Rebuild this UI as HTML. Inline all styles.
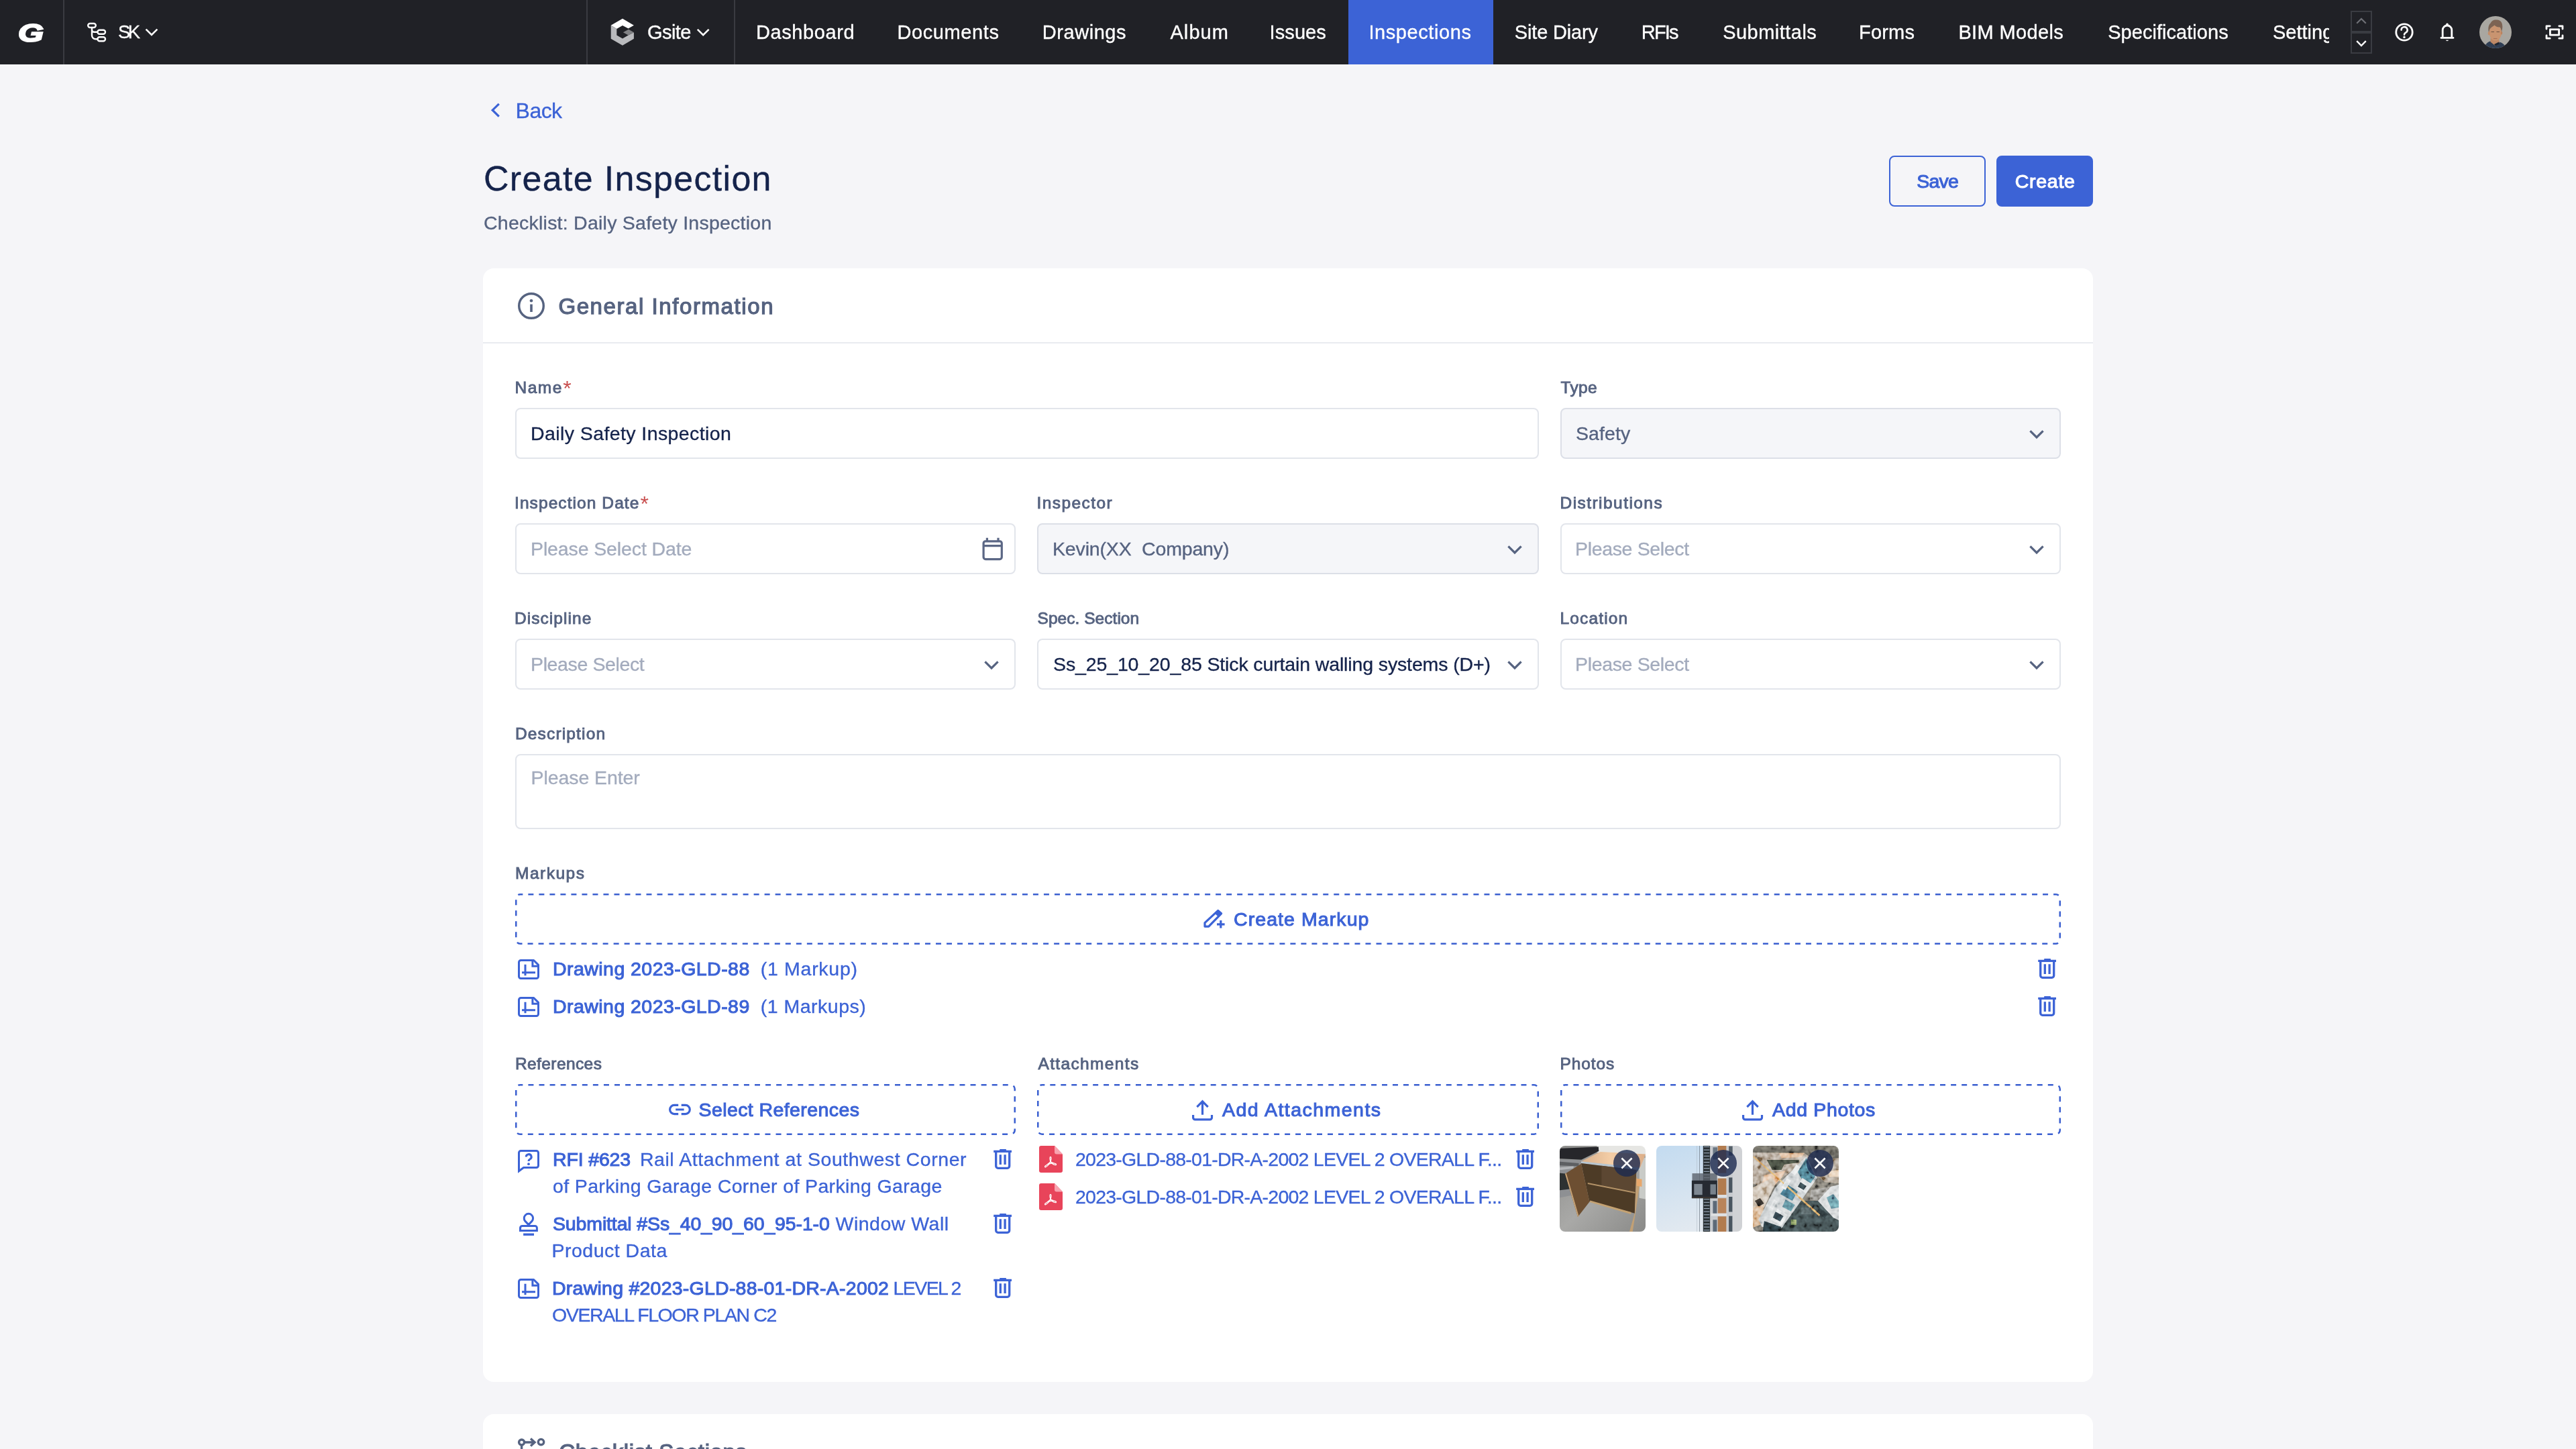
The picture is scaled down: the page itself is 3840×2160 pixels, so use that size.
<!DOCTYPE html>
<html lang="en">
<head>
<meta charset="utf-8">
<title>Create Inspection</title>
<style>
*{box-sizing:border-box;margin:0;padding:0}
html,body{width:3840px;height:2160px;overflow:hidden;background:#f5f5f8}
body{font-family:"Liberation Sans",sans-serif;-webkit-text-stroke-width:.012em;font-size:28px;color:#15234b;position:relative}
svg{display:block}
.abs{position:absolute}
/* NAV */
#nav{position:absolute;left:0;top:0;width:3840px;height:96px;background:#202126;color:#fff}
#nav .t,#back,#title,#sub,.btn,.card{will-change:transform}
#nav .div{position:absolute;top:0;width:2px;height:96px;background:#3a3b41}
#nav .t{position:absolute;top:0;height:96px;line-height:96px;font-size:29px;white-space:nowrap}
#nav .act{position:absolute;left:2010px;top:0;width:216px;height:96px;background:#3c63d6}
#glogo{left:26.5px;top:20px;width:46px;height:60px;font-size:37px;line-height:60px;font-weight:bold;font-style:italic;color:#fff;-webkit-text-stroke:2.2px #fff;transform:scaleX(1.32);transform-origin:0 50%}
#avatar{left:3696px;top:24px;width:48px;height:48px}
/* HEAD */
#back{position:absolute;left:768px;top:141px;font-size:32px;line-height:48px;color:#3c63d6}
#title{position:absolute;left:720px;top:226px;font-size:52px;line-height:80px;color:#15234b;white-space:nowrap}
#sub{position:absolute;left:720px;top:312px;font-size:28.5px;line-height:40px;color:#566380;white-space:nowrap}
.btn{position:absolute;top:232px;width:144px;height:76px;border-radius:8px;font-weight:normal;font-size:28.5px;line-height:72px;text-align:center}
#save{left:2816px;-webkit-text-stroke:1.05px #3c63d6;border:2px solid #3c63d6;color:#3c63d6;background:transparent}
#create{left:2976px;-webkit-text-stroke:1.05px #fff;border:2px solid #3c63d6;background:#3c63d6;color:#fff}
/* CARD */
.card{position:absolute;left:720px;width:2400px;background:#fff;border-radius:16px}
#c1{top:400px;height:1660px}
#c2{top:2108px;height:200px}
.chead{position:absolute;left:0;top:0;width:2400px;height:112px;border-bottom:2px solid #e9ebf0}
.chead .ht{position:absolute;left:112px;top:33px;font-size:33px;line-height:48px;font-weight:normal;-webkit-text-stroke:1.25px #566380;color:#566380;white-space:nowrap}
.lbl{position:absolute;font-size:24.5px;line-height:32px;font-weight:normal;-webkit-text-stroke:.9px #566380;color:#566380;white-space:nowrap}
.lbl i{-webkit-text-stroke:0;color:#c94f4f;font-style:normal;font-weight:normal;font-size:32px;line-height:0;position:relative;top:4px;left:0}
.inp{position:absolute;height:76px;border:2px solid #e2e5eb;border-radius:8px;background:#fff;font-size:28.5px;line-height:72px;padding-left:22px;color:#15234b;white-space:nowrap;overflow:hidden}
.inp.dis{background:#f5f6f9;border-color:#dcdfe7;color:#566380}
.inp.ph{color:#a3abbd}
.w1{width:746.67px}
.dash{position:absolute;height:76px;border-radius:6px;color:#3c63d6;font-weight:bold;font-size:29px;line-height:76px;white-space:nowrap}
.dash svg.bd{position:absolute;left:0;top:0}
.lnk{position:absolute;color:#3c63d6;font-size:28.5px;line-height:40px;white-space:nowrap}
.lnk b{font-size:28.5px;font-weight:normal;-webkit-text-stroke:1.05px #3c63d6}
.ic{position:absolute}
.photo{position:absolute;width:128px;height:128px;border-radius:8px;overflow:hidden}
.dt{position:absolute;color:#3c63d6;font-weight:normal;-webkit-text-stroke:1.05px #3c63d6;font-size:28.5px;line-height:40px;white-space:nowrap}
.mk{margin-left:18px}

</style>
</head>
<body>
<div id="nav">
  <div class="div" style="left:94px"></div>
  <div class="div" style="left:874px"></div>
  <div class="div" style="left:1094px"></div>
  <div class="act"></div>
  <svg class="abs" style="left:0;top:0" width="3840" height="96" viewBox="0 0 3840 96" fill="none">
    <!-- org tree icon -->
    <g stroke="#fff" stroke-width="2.4" fill="none" stroke-linecap="round" stroke-linejoin="round">
      <rect x="131.2" y="35" width="11.6" height="6" rx="3"/>
      <rect x="145.4" y="44.8" width="11.6" height="6" rx="3"/>
      <rect x="145.4" y="55.2" width="11.6" height="6" rx="3"/>
      <path d="M137 41.5V52.7a5.5 5.5 0 0 0 5.5 5.5H145M137 44.5a3.3 3.3 0 0 0 3.3 3.3H145"/>
    </g>
    <!-- chevrons -->
    <g stroke="#fff" stroke-width="2.6" fill="none">
      <path d="M217.6 43.6l8.4 8.4 8.4-8.4"/>
      <path d="M1039.8 43.8l8.4 8.4 8.4-8.4"/>
    </g>
    <!-- gsite hex -->
    <polygon fill="#fff" points="910.7,37.7 928,27.8 944.9,37.7 936.6,42.6 928,38 919.3,42.9"/>
    <polygon fill="#b9babd" points="910.7,37.7 919.3,42.9 919.3,52.6 928,57.6 936.6,52.6 944.9,48.3 944.9,57.8 928,67.8 910.7,57.8"/>
    <polygon fill="#808184" points="928.9,48.2 937,43.8 944.9,48.3 936.6,52.6"/>
    <!-- stepper -->
    <rect x="3505" y="17" width="30" height="30" stroke="#3a3c42" stroke-width="2"/>
    <rect x="3505" y="49" width="30" height="30" stroke="#3a3c42" stroke-width="2"/>
    <path d="M3513.2 34.8l6.8-6.8 6.8 6.8" stroke="#6e7076" stroke-width="2.2"/>
    <path d="M3513.2 61.2l6.8 6.8 6.8-6.8" stroke="#fff" stroke-width="2.4"/>
    <!-- help -->
    <circle cx="3584" cy="48" r="12.2" stroke="#fff" stroke-width="2.8"/>
    <path d="M3579.6 44.6a4.5 4.5 0 1 1 6.6 4c-1.5.8-2.2 1.6-2.2 3.2" stroke="#fff" stroke-width="2.6" stroke-linecap="round"/>
    <circle cx="3584" cy="55.4" r="1.7" fill="#fff"/>
    <!-- bell -->
    <path d="M3639 56.4h18M3641.2 56v-11.2a6.8 6.8 0 0 1 13.6 0V56" stroke="#fff" stroke-width="2.8" stroke-linecap="round" stroke-linejoin="round"/>
    <circle cx="3648" cy="36.2" r="1.8" fill="#fff"/>
    <path d="M3645.8 59.8a2.4 2.4 0 0 0 4.4 0z" fill="#fff"/>
    <!-- fullscreen -->
    <g stroke="#fff" stroke-width="2.8" stroke-linecap="round" stroke-linejoin="round">
      <path d="M3796 43v-4.200h5.200M3814.800 38.800H3820V43M3820 53v4.200h-5.200M3801.200 57.200H3796V53"/>
      <rect x="3801.400" y="43.800" width="13.200" height="8.400"/>
    </g>
  </svg>
  <div class="abs" id="glogo">G</div>
  <div class="abs" id="avatar"><svg width="48" height="48" viewBox="0 0 48 48"><defs><clipPath id="avc"><circle cx="24" cy="24" r="24"/></clipPath><filter id="avb" x="-10%" y="-10%" width="120%" height="120%"><feGaussianBlur stdDeviation=".6"/></filter></defs><g clip-path="url(#avc)"><rect width="48" height="48" fill="#a9a7a1"/><g filter="url(#avb)"><path d="M7 50c.500-6 4-11 9-12.500l6.500 1.500 7-.500c6 1.500 9.500 5.500 11 11.500z" fill="#2e3c52"/><path d="M16.500 33l12.500 1 1 6-6 4.500-7.500-6z" fill="#bd8866"/><path d="M22 42l7-3.500 1 3-6 3z" fill="#1f2733"/><ellipse cx="23.800" cy="25" rx="9.300" ry="11.500" fill="#c9946f"/><ellipse cx="14.300" cy="25.500" rx="1.600" ry="2.800" fill="#c48d69"/><ellipse cx="33" cy="25" rx="1.300" ry="2.600" fill="#b98361"/><path d="M14 24c-1.500-6-.500-11 3-14 1-3 5-5 8.500-4.500 4-.500 8 2.500 8.500 7 .800 3.500.200 7.500-1 11-.300-3-1-5.500-2.500-7-3 .500-6-1-8-3-2.500 2-5.500 3.500-7 6-.500 1.500-1 3-1.500 4.500z" fill="#7b6453"/><path d="M17.500 23.500h4.500M25.500 23.500h4.500" stroke="#6b5140" stroke-width="1.200"/><path d="M21 33.500h5.500" stroke="#a86f58" stroke-width="1.100"/></g></g></svg></div>
  <div class="t" style="left:176px;font-size:27.5px"><span id="t_n0" style="letter-spacing:-3.50px;">SK</span></div>
  <div class="t" style="left:964px"><span id="t_n1" style="letter-spacing:-0.55px;position:relative;left:1.0px;">Gsite</span></div>
  <div class="t" style="left:1128px"><span id="t_n2" style="letter-spacing:0.60px;position:relative;left:-1.0px;">Dashboard</span></div>
  <div class="t" style="left:1339px"><span id="t_n3" style="letter-spacing:0.60px;position:relative;left:-1.6px;">Documents</span></div>
  <div class="t" style="left:1554px"><span id="t_n4" style="letter-spacing:0.54px;position:relative;left:-0.2px;">Drawings</span></div>
  <div class="t" style="left:1744px"><span id="t_n5" style="letter-spacing:1.10px;position:relative;left:0.4px;">Album</span></div>
  <div class="t" style="left:1894px"><span id="t_n6" style="letter-spacing:0.08px;position:relative;left:-1.4px;">Issues</span></div>
  <div class="t" style="left:2042px"><span id="t_n7" style="letter-spacing:0.58px;position:relative;left:-1.6px;">Inspections</span></div>
  <div class="t" style="left:2258px"><span id="t_n8" style="letter-spacing:-0.16px;position:relative;left:-0.2px;">Site Diary</span></div>
  <div class="t" style="left:2448px"><span id="t_n9" style="letter-spacing:-1.87px;position:relative;left:-1.2px;">RFIs</span></div>
  <div class="t" style="left:2568px"><span id="t_n10" style="letter-spacing:0.47px;position:relative;left:0.2px;">Submittals</span></div>
  <div class="t" style="left:2773px"><span id="t_n11" style="letter-spacing:0.20px;position:relative;left:-2.0px;">Forms</span></div>
  <div class="t" style="left:2920px"><span id="t_n12" style="letter-spacing:0.36px;position:relative;left:-0.6px;">BIM Models</span></div>
  <div class="t" style="left:3142px"><span id="t_n13" style="letter-spacing:0.04px;position:relative;left:0.2px;">Specifications</span></div>
  <div class="t" style="left:3388px;width:84px;overflow:hidden">Settings</div>
</div>

<svg class="abs" style="left:726px;top:148px" width="26" height="32" viewBox="0 0 26 32" fill="none"><path d="M17.800 6.800L8.200 16.200l9.600 9.400" stroke="#3c63d6" stroke-width="3.200"/></svg>
<div id="back"><span id="t_back" style="letter-spacing:-0.54px;position:relative;left:0.6px;">Back</span></div>
<div id="title"><span id="t_title" style="letter-spacing:1.31px;position:relative;left:1.0px;">Create Inspection</span></div>
<div id="sub"><span id="t_sub" style="letter-spacing:0.24px;position:relative;left:1.0px;">Checklist: Daily Safety Inspection</span></div>
<div class="btn" id="save"><span id="t_save" style="letter-spacing:-0.77px;position:relative;left:0.1px;">Save</span></div>
<div class="btn" id="create"><span id="t_create" style="letter-spacing:0.70px;position:relative;left:0.7px;">Create</span></div>

<div class="card" id="c1">
  <div class="chead"><svg class="ic" style="left:50px;top:34px" width="44" height="44" viewBox="0 0 44 44" fill="none"><circle cx="22" cy="22" r="18.300" stroke="#566380" stroke-width="3.400"/><rect x="20.200" y="19.600" width="3.600" height="11.400" fill="#566380"/><circle cx="22" cy="14.300" r="2.300" fill="#566380"/></svg><div class="ht"><span id="t_ht1" style="letter-spacing:1.58px;position:relative;left:0.4px;">General Information</span></div></div>
  <!--FORM-->
  <div class="lbl" style="left:48.00px;top:161.8px"><span id="t_L_Name" style="letter-spacing:1.50px;position:relative;left:-0.5px;">Name</span><i>*</i></div>
  <div class="inp " style="left:48.00px;top:208px;width:1526.00px"><span id="t_I_48_208" style="letter-spacing:0.41px;position:relative;left:-1.0px;">Daily Safety Inspection</span></div>
  <div class="lbl" style="left:1606.00px;top:161.8px"><span id="t_L_Type" style="letter-spacing:0.33px;position:relative;left:0.5px;">Type</span></div>
  <div class="inp dis" style="left:1606.00px;top:208px;width:746.00px"><span id="t_I_1606_208" style="letter-spacing:0.10px;position:relative;left:-1.0px;">Safety</span></div>
  <svg class="ic" style="left:2302px;top:238px" width="28" height="20" viewBox="0 0 28 20" fill="none"><path d="M4.4 4.400l9.600 9.600 9.600-9.600" stroke="#566380" stroke-width="3.200"/></svg>
  <div class="lbl" style="left:48.00px;top:333.8px"><span id="t_L_InspectionDate" style="letter-spacing:1.08px;position:relative;left:-1.0px;">Inspection Date</span><i>*</i></div>
  <div class="inp ph" style="left:48.00px;top:380px;width:746.00px"><span id="t_I_48_380" style="letter-spacing:-0.12px;position:relative;left:-1.0px;">Please Select Date</span></div>
  <svg class="ic" style="left:744px;top:400px" width="32" height="36" viewBox="0 0 32 36" fill="none" stroke="#5b6785" stroke-width="3.200"><rect x="2.1" y="6.800" width="27.200" height="26.800" rx="3"/><path d="M7.400 1.800v5M24 1.800v5M2.100 13.600h27.200"/></svg>
  <div class="lbl" style="left:826.00px;top:333.8px"><span id="t_L_Inspector" style="letter-spacing:1.42px;position:relative;left:-0.5px;">Inspector</span></div>
  <div class="inp dis" style="left:826.00px;top:380px;width:748.00px"><span id="t_I_826_380" style="letter-spacing:-0.16px;position:relative;left:-1.0px;">Kevin(XX&nbsp; Company)</span></div>
  <svg class="ic" style="left:1524px;top:410px" width="28" height="20" viewBox="0 0 28 20" fill="none"><path d="M4.4 4.400l9.600 9.600 9.600-9.600" stroke="#566380" stroke-width="3.200"/></svg>
  <div class="lbl" style="left:1606.00px;top:333.8px"><span id="t_L_Distributions" style="letter-spacing:1.45px;position:relative;left:-0.5px;">Distributions</span></div>
  <div class="inp ph" style="left:1606.00px;top:380px;width:746.00px"><span id="t_I_1606_380" style="letter-spacing:-0.34px;position:relative;left:-2.0px;">Please Select</span></div>
  <svg class="ic" style="left:2302px;top:410px" width="28" height="20" viewBox="0 0 28 20" fill="none"><path d="M4.4 4.400l9.600 9.600 9.600-9.600" stroke="#566380" stroke-width="3.200"/></svg>
  <div class="lbl" style="left:48.00px;top:505.8px"><span id="t_L_Discipline" style="letter-spacing:1.05px;position:relative;left:-1.0px;">Discipline</span></div>
  <div class="inp ph" style="left:48.00px;top:552px;width:746.00px"><span id="t_I_48_552" style="letter-spacing:-0.38px;position:relative;left:-1.0px;">Please Select</span></div>
  <svg class="ic" style="left:744px;top:582px" width="28" height="20" viewBox="0 0 28 20" fill="none"><path d="M4.4 4.400l9.600 9.600 9.600-9.600" stroke="#566380" stroke-width="3.200"/></svg>
  <div class="lbl" style="left:826.00px;top:505.8px"><span id="t_L_SpecSection" style="letter-spacing:0.04px;position:relative;left:0.5px;">Spec. Section</span></div>
  <div class="inp spec" style="left:826.00px;top:552px;width:748.00px"><span id="t_I_826_552" style="letter-spacing:-0.13px;">Ss_25_10_20_85 Stick curtain walling systems (D+)</span></div>
  <svg class="ic" style="left:1524px;top:582px" width="28" height="20" viewBox="0 0 28 20" fill="none"><path d="M4.4 4.400l9.600 9.600 9.600-9.600" stroke="#566380" stroke-width="3.200"/></svg>
  <div class="lbl" style="left:1606.00px;top:505.8px"><span id="t_L_Location" style="letter-spacing:1.14px;position:relative;left:-0.5px;">Location</span></div>
  <div class="inp ph" style="left:1606.00px;top:552px;width:746.00px"><span id="t_I_1606_552" style="letter-spacing:-0.34px;position:relative;left:-2.0px;">Please Select</span></div>
  <svg class="ic" style="left:2302px;top:582px" width="28" height="20" viewBox="0 0 28 20" fill="none"><path d="M4.4 4.400l9.600 9.600 9.600-9.600" stroke="#566380" stroke-width="3.200"/></svg>
  <div class="lbl" style="left:48.00px;top:677.8px"><span id="t_L_Description" style="letter-spacing:1.15px;">Description</span></div>
  <div class="inp ph" style="left:48px;top:724px;width:2304px;height:112px;line-height:40px;padding-top:13px"><span id="t_I_desc" style="letter-spacing:-0.08px;position:relative;left:-0.5px;">Please Enter</span></div>
  <div class="lbl" style="left:48.00px;top:885.8px"><span id="t_L_Markups" style="letter-spacing:1.49px;">Markups</span></div>
  <svg class="ic" style="left:48.00px;top:932px" width="2304.00" height="76" fill="none"><rect x="1.250" y="1.250" width="2301.50" height="73.500" rx="6" stroke="#3a5fd0" stroke-width="2.500" stroke-dasharray="8 8.012" stroke-dashoffset="3.900"/></svg>
  <svg class="ic" style="left:1074px;top:955px" width="34" height="31" viewBox="0 0 34 31" fill="none"><path d="M21.700 2.400l4.900 4.400L7.700 26.100H2V20.600z" stroke="#3c63d6" stroke-width="3.200" stroke-linejoin="round"/><path d="M21.700 1.400l6 5.400-5.200 5.300-5.900-5.600z" fill="#3c63d6"/><path d="M25.800 17v11.600M20 22.800h11.600" stroke="#3c63d6" stroke-width="3.200"/></svg>
  <div class="dt" style="left:1118.5px;top:950px"><span id="t_D_cm" style="letter-spacing:1.08px;position:relative;left:0.5px;">Create Markup</span></div>
  <svg class="ic" style="left:52px;top:1030px" width="32" height="30" viewBox="0 0 32 30" fill="none" stroke="#3c63d6" stroke-width="3"><path d="M23.600 1.500H4.500a3 3 0 0 0-3 3v21a3 3 0 0 0 3 3h23a3 3 0 0 0 3-3V8.400z" stroke-linejoin="round"/><path d="M21.900 1.500v8.700h8.600M11 7.700v16.600M6 19.700h20"/></svg>
  <div class="lnk" style="left:105px;top:1024px"><b><span id="t_M_b0" style="letter-spacing:0.45px;position:relative;left:-1.0px;">Drawing 2023-GLD-88</span></b><span class="mk"><span id="t_M_m0" style="letter-spacing:0.72px;position:relative;left:-3.0px;">(1 Markup)</span></span></div>
  <svg class="ic" style="left:2317px;top:1028px" width="30" height="32" viewBox="0 0 30 32" fill="none"><path d="M1.200 4.400h26.800" stroke="#3c63d6" stroke-width="3.300"/><rect x="10.100" y="1" width="9.900" height="2.500" rx=".8" fill="#3c63d6"/><path d="M4.700 5v21.300a3 3 0 0 0 3 3h14a3 3 0 0 0 3-3V5" stroke="#3c63d6" stroke-width="3.300"/><path d="M11.300 9.300v14.600M18.100 9.300v14.600" stroke="#3c63d6" stroke-width="3.300"/></svg>
  <svg class="ic" style="left:52px;top:1086px" width="32" height="30" viewBox="0 0 32 30" fill="none" stroke="#3c63d6" stroke-width="3"><path d="M23.600 1.500H4.500a3 3 0 0 0-3 3v21a3 3 0 0 0 3 3h23a3 3 0 0 0 3-3V8.400z" stroke-linejoin="round"/><path d="M21.900 1.500v8.700h8.600M11 7.700v16.600M6 19.700h20"/></svg>
  <div class="lnk" style="left:105px;top:1080px"><b><span id="t_M_b1" style="letter-spacing:0.45px;position:relative;left:-1.0px;">Drawing 2023-GLD-89</span></b><span class="mk"><span id="t_M_m1" style="letter-spacing:0.50px;position:relative;left:-3.0px;">(1 Markups)</span></span></div>
  <svg class="ic" style="left:2317px;top:1084px" width="30" height="32" viewBox="0 0 30 32" fill="none"><path d="M1.200 4.400h26.800" stroke="#3c63d6" stroke-width="3.300"/><rect x="10.100" y="1" width="9.900" height="2.500" rx=".8" fill="#3c63d6"/><path d="M4.700 5v21.300a3 3 0 0 0 3 3h14a3 3 0 0 0 3-3V5" stroke="#3c63d6" stroke-width="3.300"/><path d="M11.300 9.300v14.600M18.100 9.300v14.600" stroke="#3c63d6" stroke-width="3.300"/></svg>
  <div class="lbl" style="left:48.00px;top:1169.8px"><span id="t_L_References" style="letter-spacing:0.40px;">References</span></div>
  <div class="lbl" style="left:826.00px;top:1169.8px"><span id="t_L_Attachments" style="letter-spacing:1.35px;position:relative;left:1.5px;">Attachments</span></div>
  <div class="lbl" style="left:1606.00px;top:1169.8px"><span id="t_L_Photos" style="letter-spacing:0.90px;position:relative;left:-0.5px;">Photos</span></div>
  <svg class="ic" style="left:48.00px;top:1216px" width="746.00" height="76" fill="none"><rect x="1.250" y="1.250" width="743.50" height="73.500" rx="6" stroke="#3a5fd0" stroke-width="2.500" stroke-dasharray="8 8.076" stroke-dashoffset="3.900"/></svg>
  <svg class="ic" style="left:826.00px;top:1216px" width="748.00" height="76" fill="none"><rect x="1.250" y="1.250" width="745.50" height="73.500" rx="6" stroke="#3a5fd0" stroke-width="2.500" stroke-dasharray="8 7.958" stroke-dashoffset="3.900"/></svg>
  <svg class="ic" style="left:1606.00px;top:1216px" width="746.00" height="76" fill="none"><rect x="1.250" y="1.250" width="743.50" height="73.500" rx="6" stroke="#3a5fd0" stroke-width="2.500" stroke-dasharray="8 8.076" stroke-dashoffset="3.900"/></svg>
  <svg class="ic" style="left:277px;top:1244px" width="33" height="20" viewBox="0 0 33 20" fill="none" stroke="#3c63d6" stroke-width="3.200"><path d="M14.200 3.400H8.200a6.600 6.600 0 0 0 0 13.200h6M18.700 3.400h6a6.600 6.600 0 0 1 0 13.200h-6M10.200 10h12.400"/></svg>
  <div class="dt" style="left:321px;top:1234px"><span id="t_D_sr" style="letter-spacing:0.41px;position:relative;left:0.5px;">Select References</span></div>
  <svg class="ic" style="left:1057px;top:1239px" width="32" height="32" viewBox="0 0 32 32" fill="none" stroke="#3c63d6" stroke-width="3.200"><path d="M15.500 22.700V3.500M7.300 11.200l8.200-8.300 8.200 8.300" /><path d="M1.600 23v3.900a3 3 0 0 0 3 3h21.900a3 3 0 0 0 3-3V23"/></svg>
  <div class="dt" style="left:1100.5px;top:1234px"><span id="t_D_aa" style="letter-spacing:1.47px;position:relative;left:1.5px;">Add Attachments</span></div>
  <svg class="ic" style="left:1877px;top:1239px" width="32" height="32" viewBox="0 0 32 32" fill="none" stroke="#3c63d6" stroke-width="3.200"><path d="M15.500 22.700V3.500M7.300 11.200l8.200-8.300 8.200 8.300" /><path d="M1.600 23v3.900a3 3 0 0 0 3 3h21.900a3 3 0 0 0 3-3V23"/></svg>
  <div class="dt" style="left:1920px;top:1234px"><span id="t_D_ap" style="letter-spacing:0.66px;position:relative;left:2.0px;">Add Photos</span></div>
  <svg class="ic" style="left:52px;top:1314px" width="32" height="36" viewBox="0 0 32 36" fill="none"><path d="M1.500 31.800V4.500a3 3 0 0 1 3-3h23a3 3 0 0 1 3 3v19a3 3 0 0 1-3 3H8.500z" stroke="#3c63d6" stroke-width="3" stroke-linejoin="miter"/><path d="M12.300 10.600a3.900 3.900 0 1 1 5.700 3.400c-1.500.8-2 1.500-2 3" stroke="#3c63d6" stroke-width="3.100"/><circle cx="16" cy="21.200" r="1.900" fill="#3c63d6"/></svg>
  <div class="lnk" style="left:105px;top:1308px"><b><span id="t_R_b0" style="letter-spacing:-0.16px;position:relative;left:-1.0px;">RFI #623</span></b></div>
  <div class="lnk" style="left:234.4px;top:1308px"><span id="t_R_x0" style="letter-spacing:0.57px;position:relative;left:-0.5px;">Rail Attachment at Southwest Corner</span></div>
  <div class="lnk" style="left:105px;top:1348px"><span id="t_R_y0" style="letter-spacing:0.36px;position:relative;left:-1.0px;">of Parking Garage Corner of Parking Garage</span></div>
  <svg class="ic" style="left:760px;top:1312px" width="30" height="32" viewBox="0 0 30 32" fill="none"><path d="M1.200 4.400h26.800" stroke="#3c63d6" stroke-width="3.300"/><rect x="10.100" y="1" width="9.900" height="2.500" rx=".8" fill="#3c63d6"/><path d="M4.700 5v21.300a3 3 0 0 0 3 3h14a3 3 0 0 0 3-3V5" stroke="#3c63d6" stroke-width="3.300"/><path d="M11.300 9.300v14.600M18.100 9.300v14.600" stroke="#3c63d6" stroke-width="3.300"/></svg>
  <svg class="ic" style="left:52px;top:1406px" width="32" height="38" viewBox="0 0 32 38" fill="none" stroke="#3c63d6" stroke-width="3"><path d="M15.900 19.600l-5-5.200a6.650 6.650 0 1 1 10 0z" stroke-linejoin="round"/><path d="M3.500 29.900v-5.500a3 3 0 0 1 3-3h18.900a3 3 0 0 1 3 3v5.500M2 28.400h27.900"/><path d="M8.100 34.200H24" stroke-width="3.400"/></svg>
  <div class="lnk" style="left:105px;top:1404px"><b><span id="t_R_b1" style="letter-spacing:-0.14px;position:relative;left:-1.0px;">Submittal #Ss_40_90_60_95-1-0</span></b></div>
  <div class="lnk" style="left:523.5px;top:1404px"><span id="t_R_x1" style="letter-spacing:0.50px;position:relative;left:2.0px;">Window Wall</span></div>
  <div class="lnk" style="left:105px;top:1444px"><span id="t_R_y1" style="letter-spacing:0.49px;position:relative;left:-2.5px;">Product Data</span></div>
  <svg class="ic" style="left:760px;top:1408px" width="30" height="32" viewBox="0 0 30 32" fill="none"><path d="M1.200 4.400h26.800" stroke="#3c63d6" stroke-width="3.300"/><rect x="10.100" y="1" width="9.900" height="2.500" rx=".8" fill="#3c63d6"/><path d="M4.700 5v21.300a3 3 0 0 0 3 3h14a3 3 0 0 0 3-3V5" stroke="#3c63d6" stroke-width="3.300"/><path d="M11.300 9.300v14.600M18.100 9.300v14.600" stroke="#3c63d6" stroke-width="3.300"/></svg>
  <svg class="ic" style="left:52px;top:1506px" width="32" height="30" viewBox="0 0 32 30" fill="none" stroke="#3c63d6" stroke-width="3"><path d="M23.600 1.500H4.500a3 3 0 0 0-3 3v21a3 3 0 0 0 3 3h23a3 3 0 0 0 3-3V8.400z" stroke-linejoin="round"/><path d="M21.900 1.500v8.700h8.600M11 7.700v16.600M6 19.700h20"/></svg>
  <div class="lnk" style="left:105px;top:1500px"><b><span id="t_R_b2" style="letter-spacing:0.24px;position:relative;left:-2.0px;">Drawing #2023-GLD-88-01-DR-A-2002</span></b></div>
  <div class="lnk" style="left:612.0px;top:1500px"><span id="t_R_x2" style="letter-spacing:-1.58px;position:relative;left:-0.5px;">LEVEL 2</span></div>
  <div class="lnk" style="left:105px;top:1540px"><span id="t_R_y2" style="letter-spacing:-1.40px;position:relative;left:-2.0px;">OVERALL FLOOR PLAN C2</span></div>
  <svg class="ic" style="left:760px;top:1504px" width="30" height="32" viewBox="0 0 30 32" fill="none"><path d="M1.200 4.400h26.800" stroke="#3c63d6" stroke-width="3.300"/><rect x="10.100" y="1" width="9.900" height="2.500" rx=".8" fill="#3c63d6"/><path d="M4.700 5v21.300a3 3 0 0 0 3 3h14a3 3 0 0 0 3-3V5" stroke="#3c63d6" stroke-width="3.300"/><path d="M11.300 9.300v14.600M18.100 9.300v14.600" stroke="#3c63d6" stroke-width="3.300"/></svg>
  <svg class="ic" style="left:829.00px;top:1308px" width="35" height="40" viewBox="0 0 35 40"><path d="M3 0h20l12 12.400V37a3 3 0 0 1-3 3H3a3 3 0 0 1-3-3V3a3 3 0 0 1 3-3z" fill="#e8445a"/><path d="M23 0l12 12.400h-9a3 3 0 0 1-3-3z" fill="#f8a3af"/><g fill="none" stroke="#fff" stroke-width="1.300"><path d="M17 16.500c1.300 0 1.300 3.200 0 7.200-1.300-4-1.300-7.200 0-7.200z"/><path d="M17 23.700c-1.800 3.500-4.600 6.600-7.200 8-1.400.7-1.600-.8-.4-1.900 2-1.700 5-2.700 7.600-6.100z"/><path d="M17 23.700c1.800 2.600 4.500 4.600 7.200 5 1.600.2 1.700-1.300.2-2-2.300-1-5-1-7.400-3z"/><path d="M12.600 27.700c2.600-1.200 5.700-1.800 8.600-1.700"/></g></svg>
  <div class="lnk att" style="left:882px;top:1308px"><span id="t_A_0" style="letter-spacing:-0.76px;position:relative;left:1.0px;">2023-GLD-88-01-DR-A-2002 LEVEL 2 OVERALL F...</span></div>
  <svg class="ic" style="left:1539px;top:1312px" width="30" height="32" viewBox="0 0 30 32" fill="none"><path d="M1.200 4.400h26.800" stroke="#3c63d6" stroke-width="3.300"/><rect x="10.100" y="1" width="9.900" height="2.500" rx=".8" fill="#3c63d6"/><path d="M4.700 5v21.300a3 3 0 0 0 3 3h14a3 3 0 0 0 3-3V5" stroke="#3c63d6" stroke-width="3.300"/><path d="M11.300 9.300v14.600M18.100 9.300v14.600" stroke="#3c63d6" stroke-width="3.300"/></svg>
  <svg class="ic" style="left:829.00px;top:1364px" width="35" height="40" viewBox="0 0 35 40"><path d="M3 0h20l12 12.400V37a3 3 0 0 1-3 3H3a3 3 0 0 1-3-3V3a3 3 0 0 1 3-3z" fill="#e8445a"/><path d="M23 0l12 12.400h-9a3 3 0 0 1-3-3z" fill="#f8a3af"/><g fill="none" stroke="#fff" stroke-width="1.300"><path d="M17 16.500c1.300 0 1.300 3.200 0 7.200-1.300-4-1.300-7.200 0-7.200z"/><path d="M17 23.700c-1.800 3.500-4.600 6.600-7.200 8-1.400.7-1.600-.8-.4-1.900 2-1.700 5-2.700 7.600-6.100z"/><path d="M17 23.700c1.800 2.600 4.500 4.600 7.200 5 1.600.2 1.700-1.300.2-2-2.300-1-5-1-7.400-3z"/><path d="M12.600 27.700c2.600-1.200 5.700-1.800 8.600-1.700"/></g></svg>
  <div class="lnk att" style="left:882px;top:1364px"><span id="t_A_1" style="letter-spacing:-0.76px;position:relative;left:1.0px;">2023-GLD-88-01-DR-A-2002 LEVEL 2 OVERALL F...</span></div>
  <svg class="ic" style="left:1539px;top:1368px" width="30" height="32" viewBox="0 0 30 32" fill="none"><path d="M1.200 4.400h26.800" stroke="#3c63d6" stroke-width="3.300"/><rect x="10.100" y="1" width="9.900" height="2.500" rx=".8" fill="#3c63d6"/><path d="M4.700 5v21.300a3 3 0 0 0 3 3h14a3 3 0 0 0 3-3V5" stroke="#3c63d6" stroke-width="3.300"/><path d="M11.300 9.300v14.600M18.100 9.300v14.600" stroke="#3c63d6" stroke-width="3.300"/></svg>
  <div class="photo" style="left:1605.33px;top:1308px"><svg width="128" height="128" viewBox="0 0 128 128"><defs><filter id="b1" x="-5%" y="-5%" width="110%" height="110%"><feGaussianBlur stdDeviation=".5"/></filter><linearGradient id="fl" x1="0" y1="0" x2="1" y2="1"><stop offset="0" stop-color="#8d8d8b"/><stop offset=".5" stop-color="#a9a9a7"/><stop offset="1" stop-color="#8a8a88"/></linearGradient><linearGradient id="ct" x1="0" y1="0" x2="1" y2="0"><stop offset="0" stop-color="#d9b08c"/><stop offset=".45" stop-color="#f3cda6"/><stop offset="1" stop-color="#dcae88"/></linearGradient></defs>
<g filter="url(#b1)"><rect width="128" height="128" fill="url(#fl)"/>
<polygon points="55.5,-1.1 129.8,-1.1 129.8,14.6 55.5,10.1" fill="#e6e6e3"/>
<polygon points="119.1,18.0 129.8,18.0 129.8,79.9 118.5,77.7" fill="#c9cbc7"/>
<polygon points="-1.9,20.3 31.9,20.8 31.9,70.9 -1.9,77.7" fill="#8e9093"/>
<polygon points="-1.9,40.5 11.6,41.7 17.2,64.2 -1.9,66.4" fill="#2f3133"/>
<polygon points="-1.9,23.6 28.5,25.9 28.5,30.4 -1.9,29.3" fill="#5d5f62"/>
<polygon points="-1.9,3.9 57.8,1.4 58.3,7.9 32.4,20.8 -1.9,19.1" fill="#26282b"/>
<polygon points="-1.9,32.6 20.6,30.4 20.6,33.8 -1.9,36.6" fill="#b5b7ba"/>
<polygon points="60.6,9.0 128.1,12.6 119.7,33.2 31.9,23.4" fill="url(#ct)"/>
<polygon points="31.9,23.2 119.4,32.6 119.0,36.2 31.9,26.1" fill="#b8c6d0"/>
<polygon points="31.9,25.9 114.3,36.2 112.0,100.8 44.2,82.7" fill="#4d3a28"/>
<polygon points="62.3,29.8 114.3,36.2 112.9,70.9 62.3,59.7" fill="#5b4631"/>
<polygon points="41.8,54.9 112.5,69.0 112.5,70.9 41.8,56.9" fill="#b59468"/>
<polygon points="45.4,81.6 106.7,99.1 106.2,101.9 44.8,83.9" fill="#c4a272"/>
<polygon points="114.0,45.0 119.1,59.7 108.6,128.9 103.7,128.9 111.8,100.2" fill="#c2a074"/>
<polygon points="114.6,49.0 122.5,49.8 122.5,61.0 114.6,59.7" fill="#e8a86c"/>
<polygon points="8.0,41.7 32.1,26.8 44.5,83.5 27.0,106.0" fill="#6d4f30"/>
<polygon points="8.0,41.7 9.8,40.8 28.5,104.7 27.0,106.0" fill="#c8a376"/>
</g></svg><svg class="ic" style="left:80px;top:6px" width="40" height="40" viewBox="0 0 40 40"><circle cx="20" cy="20" r="20" fill="#1b294f" fill-opacity=".8"/><path d="M12.400 12.500l15.200 15M27.600 12.500l-15.200 15" stroke="#fff" stroke-width="2.600"/></svg></div>
  <div class="photo" style="left:1749.33px;top:1308px"><svg width="128" height="128" viewBox="0 0 128 128"><defs><filter id="b2" x="-5%" y="-5%" width="110%" height="110%"><feGaussianBlur stdDeviation=".45"/></filter><linearGradient id="sky" x1="0" y1="0" x2=".3" y2="1"><stop offset="0" stop-color="#c3dbf0"/><stop offset="1" stop-color="#e2e9f0"/></linearGradient></defs>
<g filter="url(#b2)"><rect width="128" height="128" fill="url(#sky)"/>
<rect x="80" y="0" width="48" height="128" fill="#c8cbcf"/>
<rect x="114" y="0" width="14" height="128" fill="#d0d2d5"/>
<rect x="91.7" y="-1.1" width="12.6" height="41.7" fill="#b27c50"/><rect x="91.7" y="48.4" width="12.6" height="24.8" fill="#b27c50"/><rect x="91.7" y="78.2" width="12.6" height="22.5" fill="#b9845a"/><rect x="91.7" y="105.3" width="12.6" height="23.6" fill="#b27c50"/>
<rect x="108.1" y="0.6" width="5.6" height="14.1" fill="#55606b"/><rect x="108.1" y="47.3" width="5.3" height="22.5" fill="#4a5560"/><rect x="108.1" y="76.0" width="5.3" height="22.5" fill="#4a5560"/><rect x="108.1" y="104.7" width="5.3" height="23.6" fill="#4a5560"/>
<rect x="84.4" y="2.3" width="6.8" height="18.0" fill="#6b7783"/><rect x="84.4" y="82.2" width="6.0" height="20.3" fill="#5d6b78"/><rect x="84.4" y="110.3" width="6.0" height="18.0" fill="#5d6b78"/>
<rect x="81.6" y="73.2" width="23.6" height="3.4" fill="#dfe1e3"/><rect x="81.6" y="100.8" width="23.6" height="3.9" fill="#dfe1e3"/><rect x="90.6" y="45.0" width="14.6" height="3.4" fill="#dfe1e3"/>
<rect x="69.800" y="0" width="10.300" height="128" fill="#2c3036"/><rect x="70.800" y="1.0" width="8.600" height="1.100" fill="#9fb0c0"/><rect x="70.800" y="5.6" width="8.600" height="1.100" fill="#9fb0c0"/><rect x="70.800" y="10.2" width="8.600" height="1.100" fill="#9fb0c0"/><rect x="70.800" y="14.8" width="8.600" height="1.100" fill="#9fb0c0"/><rect x="70.800" y="19.4" width="8.600" height="1.100" fill="#9fb0c0"/><rect x="70.800" y="24.0" width="8.600" height="1.100" fill="#9fb0c0"/><rect x="70.800" y="28.6" width="8.600" height="1.100" fill="#9fb0c0"/><rect x="70.800" y="33.2" width="8.600" height="1.100" fill="#9fb0c0"/><rect x="70.800" y="37.8" width="8.600" height="1.100" fill="#9fb0c0"/><rect x="70.800" y="42.4" width="8.600" height="1.100" fill="#9fb0c0"/><rect x="70.800" y="47.0" width="8.600" height="1.100" fill="#9fb0c0"/><rect x="70.800" y="51.6" width="8.600" height="1.100" fill="#9fb0c0"/><rect x="70.800" y="56.2" width="8.600" height="1.100" fill="#9fb0c0"/><rect x="70.800" y="60.8" width="8.600" height="1.100" fill="#9fb0c0"/><rect x="70.800" y="65.4" width="8.600" height="1.100" fill="#9fb0c0"/><rect x="70.800" y="70.0" width="8.600" height="1.100" fill="#9fb0c0"/><rect x="70.800" y="74.6" width="8.600" height="1.100" fill="#9fb0c0"/><rect x="70.800" y="79.2" width="8.600" height="1.100" fill="#9fb0c0"/><rect x="70.800" y="83.8" width="8.600" height="1.100" fill="#9fb0c0"/><rect x="70.800" y="88.4" width="8.600" height="1.100" fill="#9fb0c0"/><rect x="70.800" y="93.0" width="8.600" height="1.100" fill="#9fb0c0"/><rect x="70.800" y="97.6" width="8.600" height="1.100" fill="#9fb0c0"/><rect x="70.800" y="102.2" width="8.600" height="1.100" fill="#9fb0c0"/><rect x="70.800" y="106.8" width="8.600" height="1.100" fill="#9fb0c0"/><rect x="70.800" y="111.4" width="8.600" height="1.100" fill="#9fb0c0"/><rect x="70.800" y="116.0" width="8.600" height="1.100" fill="#9fb0c0"/><rect x="70.800" y="120.6" width="8.600" height="1.100" fill="#9fb0c0"/><rect x="70.800" y="125.2" width="8.600" height="1.100" fill="#9fb0c0"/>
<rect x="64.300" y="0" width=".7" height="128" fill="#6c7680"/><rect x="60.400" y="0" width=".5" height="128" fill="#aab4be"/>
<rect x="53.5" y="41.1" width="37.1" height="11.8" fill="#5b636d" opacity=".8"/>
<rect x="52.9" y="51.8" width="37.9" height="26.1" fill="#252a31"/>
<rect x="56.3" y="56.9" width="12.4" height="16.3" fill="#7f8892"/><rect x="80.5" y="57.4" width="8.4" height="15.2" fill="#79828c"/>
<rect x="52.9" y="76.0" width="37.9" height="2.3" fill="#3a3530"/>
</g></svg><svg class="ic" style="left:80px;top:6px" width="40" height="40" viewBox="0 0 40 40"><circle cx="20" cy="20" r="20" fill="#1b294f" fill-opacity=".8"/><path d="M12.400 12.500l15.200 15M27.600 12.500l-15.200 15" stroke="#fff" stroke-width="2.600"/></svg></div>
  <div class="photo" style="left:1893.33px;top:1308px"><svg width="128" height="128" viewBox="0 0 128 128"><defs><filter id="b3" x="-5%" y="-5%" width="110%" height="110%"><feGaussianBlur stdDeviation=".7"/></filter><filter id="n3" x="0" y="0" width="100%" height="100%"><feTurbulence type="fractalNoise" baseFrequency=".13" numOctaves="2" seed="7"/><feColorMatrix type="matrix" values="1.2 1.2 1.2 0 -1.3  1.2 1.2 1.2 0 -1.3  1.2 1.2 1.2 0 -1.3  0 0 0 0 1"/></filter></defs>
<g filter="url(#b3)"><rect width="128" height="128" fill="#6d6a64"/>
<polygon points="0.0,0.0 128.0,0.0 128.0,18.0 76.8,17.0 0.0,16.0" fill="#5b5a52"/>
<polygon points="0.0,10.0 76.8,11.0 86.8,18.0 42.7,48.0 16.7,62.1 0.0,56.1" fill="#a79888"/>
<polygon points="38.7,11.0 76.8,10.5 72.8,17.0 42.7,18.2" fill="#dcb593"/>
<polygon points="20.7,21.0 68.8,21.0 68.8,25.0 46.7,28.0 42.7,36.0 28.7,36.0" fill="#3e4238"/>
<polygon points="16.7,44.0 48.7,37.0 42.7,48.0 30.7,61.1 11.7,64.1" fill="#dfb592"/>
<polygon points="0.0,62.1 28.7,48.0 33.7,56.1 16.7,92.1 0.0,102.1" fill="#c7b9a8"/>
<polygon points="2.7,82.1 10.7,78.1 16.7,86.1 8.7,91.1" fill="#2e2a26"/>
<polygon points="0.0,92.1 16.7,88.1 12.7,117.1 0.0,122.1" fill="#d2aa82"/>
<polygon points="96.8,22.0 128.0,18.0 128.0,56.1 106.8,54.1 94.8,44.0" fill="#a0917f"/>
<polygon points="112.8,38.0 128.0,36.0 128.0,46.0 113.8,46.5" fill="#e3c7a8"/>
<polygon points="56.8,82.1 128.0,82.1 128.0,127.9 34.7,127.9" fill="#3b4648"/>
<polygon points="79.8,15.5 95.8,48.0 42.7,123.1 13.7,121.1 8.2,110.1 33.7,62.1" fill="#c4c9cb"/>
<polygon points="79.8,18.0 92.8,46.0 80.8,64.1 66.8,39.0" fill="#4a7485"/>
<polygon points="73.8,48.0 87.8,57.1 78.8,71.1 65.8,62.1" fill="#dfe3e4"/>
<polygon points="70.8,54.1 79.8,60.1 75.8,66.1 66.8,61.1" fill="#2d3a40"/>
<polygon points="50.8,57.1 66.8,68.1 58.8,82.1 40.7,72.1" fill="#3f6a7b"/>
<polygon points="36.7,94.1 51.8,103.1 42.7,119.1 26.7,110.1" fill="#e2e5e6"/>
<polygon points="33.7,98.1 45.7,105.1 40.7,113.1 29.7,107.1" fill="#2f3d44"/>
<polygon points="48.7,80.1 62.8,88.1 56.8,98.1 43.7,91.1" fill="#557d8c"/>
<polygon points="16.7,112.1 42.7,121.1 38.7,127.9 14.7,127.9" fill="#27343a"/>
<polygon points="115.8,61.1 128.0,58.1 128.0,111.1 119.8,107.1 96.8,82.1" fill="#d3d6d7"/>
<polygon points="86.8,66.1 115.8,61.1 96.8,82.1 84.8,80.1" fill="#8d8a84"/>
<polygon points="109.8,77.1 119.8,72.1 128.0,82.1 128.0,92.1 116.8,94.1" fill="#5d8796"/>
<polygon points="0.0,16.5 1.7,15.8 100.3,102.6 98.8,105.1" fill="#d9a25e"/>
<polygon points="56.8,110.1 64.8,110.1 64.8,118.1 56.8,118.1" fill="#9fb86a" opacity=".7"/>
<polygon points="42.7,62.1 50.8,48.0 56.8,52.1 48.7,66.1" fill="#e6e9ea"/>
<polygon points="56.8,40.0 64.8,28.0 70.8,32.0 62.8,44.0" fill="#e3e6e7"/>
<polygon points="24.7,92.1 31.7,80.1 36.7,83.1 29.7,95.1" fill="#dfe2e3"/>
<polygon points="98.8,92.1 111.8,102.1 106.8,108.1 94.8,98.1" fill="#2b3538"/>
<polygon points="71.8,92.1 86.8,92.1 86.8,102.1 71.8,102.1" fill="#4b5658"/>
</g><rect width="128" height="128" filter="url(#n3)" opacity=".55" style="mix-blend-mode:overlay"/></svg><svg class="ic" style="left:80px;top:6px" width="40" height="40" viewBox="0 0 40 40"><circle cx="20" cy="20" r="20" fill="#1b294f" fill-opacity=".8"/><path d="M12.400 12.500l15.200 15M27.600 12.500l-15.200 15" stroke="#fff" stroke-width="2.600"/></svg></div>
  <!--/FORM-->
</div>
<div class="card" id="c2">
  <div class="chead"><svg class="ic" style="left:50px;top:34px" width="44" height="44" viewBox="0 0 44 44" fill="none" stroke="#566380" stroke-width="3.400"><circle cx="7.600" cy="8" r="4"/><circle cx="36.500" cy="7.600" r="4.200"/><path d="M7.600 12v26M12 8h14M21 2.500l6 5.500-6 5.500"/></svg><div class="ht"><span id="t_ht2" style="letter-spacing:0.59px;position:relative;left:1.3px;">Checklist Sections</span></div></div>
</div>
</body>
</html>
